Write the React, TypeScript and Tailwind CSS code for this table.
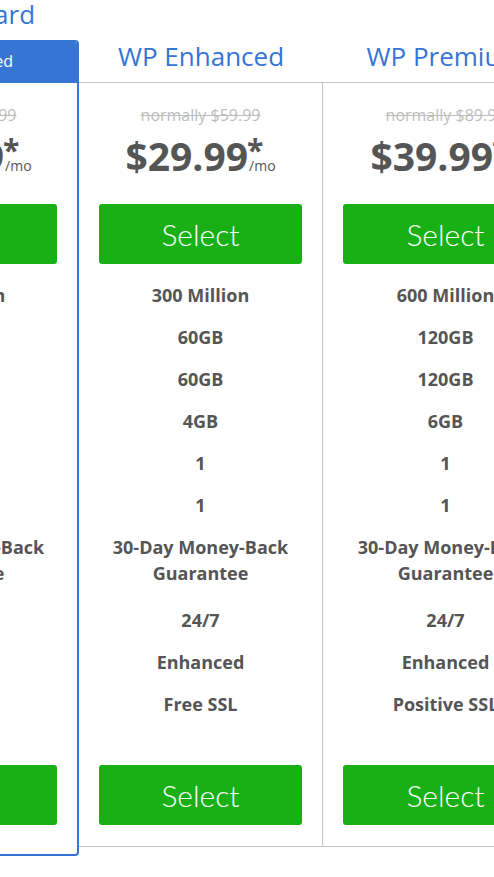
import React from 'react';

type Plan = {
  name: string;
  normally: string;
  price: string;
  features: string[];
  featured?: boolean;
};

const plans: Plan[] = [
  {
    name: 'WP Standard',
    normally: 'normally $29.99',
    price: '$19.99',
    features: ['100 Million', '30GB', '30GB', '2GB', '1', '1', 'guarantee', '24/7', 'Standard', 'Free SSL'],
    featured: true,
  },
  {
    name: 'WP Enhanced',
    normally: 'normally $59.99',
    price: '$29.99',
    features: ['300 Million', '60GB', '60GB', '4GB', '1', '1', 'guarantee', '24/7', 'Enhanced', 'Free SSL'],
  },
  {
    name: 'WP Premium',
    normally: 'normally $89.99',
    price: '$39.99',
    features: ['600 Million', '120GB', '120GB', '6GB', '1', '1', 'guarantee', '24/7', 'Enhanced', 'Positive SSL'],
  },
];

const SelectButton: React.FC<{ className?: string }> = ({ className = '' }) => (
  <button
    className={`w-full h-[60px] rounded-[3px] bg-[#19b016] text-white text-[30px] font-light leading-none flex items-center justify-center ${className}`}
    style={{ fontFamily: '"Lato Light", Lato, "Open Sans", sans-serif' }}
  >
    Select
  </button>
);

const PlanBody: React.FC<{ plan: Plan; bottomPad: string }> = ({ plan, bottomPad }) => (
  <div className={`flex flex-col items-center text-center px-5 ${bottomPad}`}>
    <div className="mt-[20px] text-[16px] leading-[24px] text-[#bdbdbd] line-through whitespace-nowrap">
      {plan.normally}
    </div>
    <div className="mt-[10px] h-[38px] flex items-baseline justify-center text-[#555555] whitespace-nowrap">
      <span className="text-[39px] leading-[38px] font-bold">{plan.price}</span>
      <span className="relative text-[14px] leading-none ml-[1px]">
        <span className="absolute left-[-2px] top-[-24px] text-[30px] leading-none font-bold">*</span>
        /mo
      </span>
    </div>
    <SelectButton className="mt-[29px]" />
    <div className="mt-[10px] w-full flex flex-col text-[18px] font-bold text-[#555555]">
      {plan.features.map((f, i) =>
        f === 'guarantee' ? (
          <div key={i} className="h-[73px] pt-[7.5px] leading-[26.7px] whitespace-nowrap">
            30-Day Money-Back
            <br />
            Guarantee
          </div>
        ) : (
          <div key={i} className="h-[42px] flex items-center justify-center leading-[27px] whitespace-nowrap">
            {f}
          </div>
        )
      )}
    </div>
    <SelectButton className="mt-[40px]" />
  </div>
);

const FeaturedColumn: React.FC<{ plan: Plan }> = ({ plan }) => (
  <div className="w-[245px] shrink-0 flex flex-col">
    <div className="h-[40px] text-center text-[26px] leading-[28px] text-[#3675d4] whitespace-nowrap">
      {plan.name}
    </div>
    <div className="border-2 border-[#3675d4] rounded-[4px] overflow-hidden">
      <div className="h-[41px] bg-[#3675d4] text-white text-center text-[16px] leading-[39px]">
        Recommended
      </div>
      <PlanBody plan={plan} bottomPad="pb-[29px]" />
    </div>
  </div>
);

const PlanColumn: React.FC<{ plan: Plan; className: string; bodyClass?: string }> = ({
  plan,
  className,
  bodyClass = '',
}) => (
  <div className={`shrink-0 flex flex-col ${className}`}>
    <div className="h-[83px] border-b border-[#c4c4c4] pt-[38px] text-center text-[26px] leading-[36px] text-[#3675d4] whitespace-nowrap">
      {plan.name}
    </div>
    <div className={`border-b border-[#c4c4c4] ${bodyClass}`}>
      <PlanBody plan={plan} bottomPad="pb-[21px]" />
    </div>
  </div>
);

export default function App() {
  return (
    <div
      className="w-[494px] h-[877px] overflow-hidden bg-white"
      style={{ fontFamily: '"Open Sans", "Liberation Sans", sans-serif' }}
    >
      <div className="flex items-start -ml-[166px]">
        <FeaturedColumn plan={plans[0]} />
        <PlanColumn plan={plans[1]} className="w-[244px]" bodyClass="border-r" />
        <PlanColumn plan={plans[2]} className="w-[245px]" />
      </div>
    </div>
  );
}
